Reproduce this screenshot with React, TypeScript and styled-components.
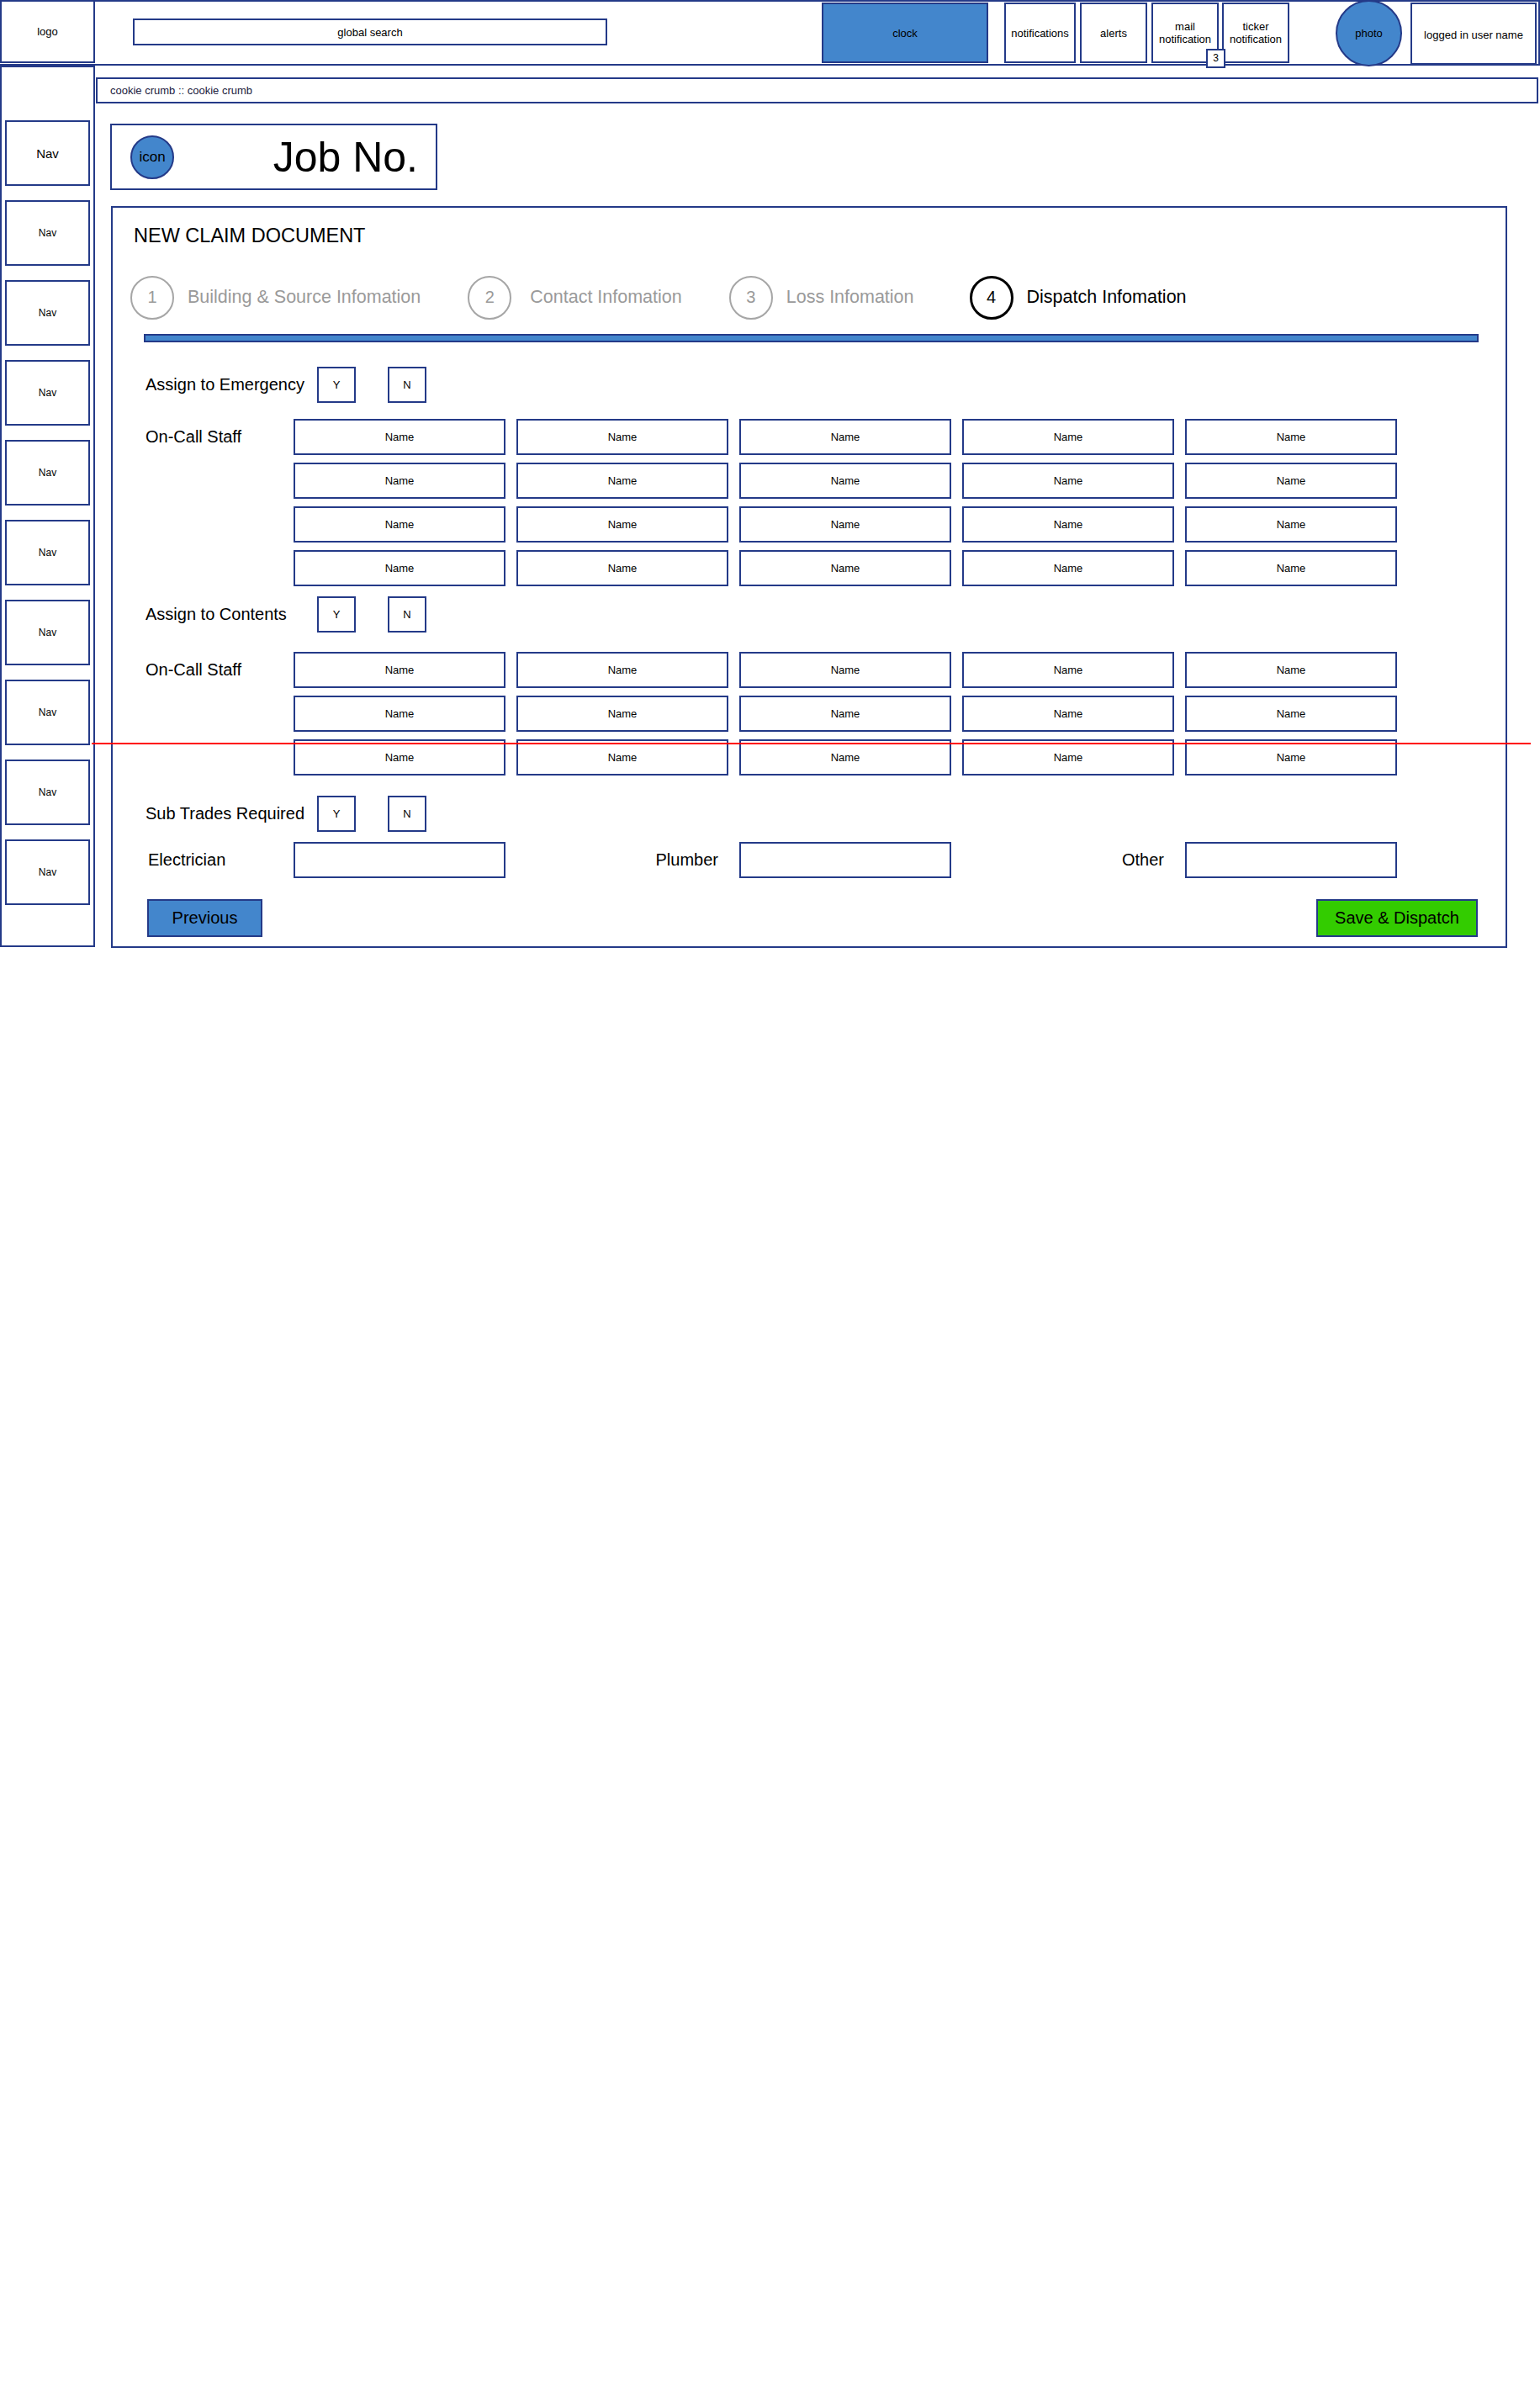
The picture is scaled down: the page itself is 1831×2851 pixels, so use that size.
import React from "react";
import styled, { createGlobalStyle } from "styled-components";

const navy = "#243a88";
const blue = "#4386cc";
const green = "#33cc00";

const GlobalStyle = createGlobalStyle`
  html, body {
    margin: 0;
    padding: 0;
    background: #ffffff;
  }
  body {
    font-family: "Liberation Sans", Arial, sans-serif;
    color: #000;
  }
  * {
    box-sizing: border-box;
  }
`;

const Page = styled.div`
  position: relative;
  width: 1831px;
  min-height: 2851px;
`;

/* ---------- header ---------- */

const Header = styled.header`
  display: flex;
  align-items: flex-start;
  height: 78px;
  border: 2px solid ${navy};
  border-left: none;
`;

const Logo = styled.div`
  width: 113px;
  height: 75px;
  margin-top: -2px;
  border: 2px solid ${navy};
  display: flex;
  align-items: center;
  justify-content: center;
  font-size: 13px;
`;

const Search = styled.div`
  width: 564px;
  height: 32px;
  margin: 20px 0 0 45px;
  border: 2px solid ${navy};
  display: flex;
  align-items: center;
  justify-content: center;
  font-size: 13px;
`;

const Tools = styled.div`
  display: flex;
  align-items: flex-start;
  margin-left: auto;
  margin-right: 2px;
`;

const ToolBox = styled.div<{ $w: number; $fill?: boolean; $gap?: number }>`
  position: relative;
  width: ${(p) => p.$w}px;
  height: 72px;
  margin-top: 1px;
  margin-left: ${(p) => p.$gap ?? 0}px;
  border: 2px solid ${navy};
  background: ${(p) => (p.$fill ? blue : "#fff")};
  display: flex;
  align-items: center;
  justify-content: center;
  text-align: center;
  font-size: 13px;
  line-height: 15px;
`;

const Badge = styled.div`
  position: absolute;
  left: 63px;
  top: 53px;
  width: 23px;
  height: 23px;
  border: 2px solid ${navy};
  background: #fff;
  display: flex;
  align-items: center;
  justify-content: center;
  font-size: 12px;
  z-index: 2;
`;

const Photo = styled.div`
  width: 79px;
  height: 79px;
  margin: -2px 0 0 55px;
  border-radius: 50%;
  border: 2px solid ${navy};
  background: ${blue};
  display: flex;
  align-items: center;
  justify-content: center;
  font-size: 13px;
  position: relative;
  z-index: 1;
`;

const UserBox = styled(ToolBox)`
  height: 74px;
  padding-top: 2px;
`;

/* ---------- body ---------- */

const Body = styled.div`
  display: flex;
  align-items: flex-start;
`;

const Sidebar = styled.nav`
  width: 113px;
  height: 1048px;
  border: 2px solid ${navy};
  padding: 63px 4px 0 4px;
  display: flex;
  flex-direction: column;
  gap: 17px;
`;

const NavItem = styled.div<{ $big?: boolean }>`
  height: 78px;
  border: 2px solid ${navy};
  display: flex;
  align-items: center;
  justify-content: center;
  font-size: ${(p) => (p.$big ? 15 : 12)}px;
`;

const Main = styled.main`
  flex: 1;
  display: flex;
  flex-direction: column;
`;

const Crumb = styled.div`
  height: 31px;
  margin: 14px 2px 0 1px;
  border: 2px solid ${navy};
  display: flex;
  align-items: center;
  padding-left: 15px;
  font-size: 13px;
  color: #1c2140;
`;

const Content = styled.div`
  padding-left: 18px;
  display: flex;
  flex-direction: column;
  align-items: flex-start;
`;

const JobBox = styled.div`
  width: 389px;
  height: 79px;
  margin-top: 24px;
  border: 2px solid ${navy};
  display: flex;
  align-items: center;
  justify-content: space-between;
  padding: 0 21px 0 22px;
`;

const IconDot = styled.div`
  width: 52px;
  height: 52px;
  border-radius: 50%;
  border: 2px solid ${navy};
  background: ${blue};
  display: flex;
  align-items: center;
  justify-content: center;
  font-size: 17px;
`;

const JobTitle = styled.div`
  font-size: 50px;
  line-height: 1;
`;

const Card = styled.section`
  width: 1660px;
  height: 882px;
  margin: 19px 0 0 1px;
  border: 2px solid ${navy};
  padding: 22px 0 0 25px;
  display: flex;
  flex-direction: column;
`;

const CardTitle = styled.h1`
  margin: 0;
  font-size: 23.5px;
  font-weight: 400;
  line-height: 1;
`;

/* ---------- stepper ---------- */

const Steps = styled.div`
  display: flex;
  align-items: center;
  gap: 56px;
  margin: 35px 0 0 -4px;
`;

const Step = styled.div<{ $gap?: number; $shift?: number }>`
  display: flex;
  align-items: center;
  gap: ${(p) => p.$gap ?? 16}px;
  margin-left: ${(p) => p.$shift ?? 0}px;
`;

const StepDot = styled.div<{ $active?: boolean }>`
  width: 52px;
  height: 52px;
  border-radius: 50%;
  border: ${(p) => (p.$active ? "3px solid #000" : "2px solid #a6a6a6")};
  color: ${(p) => (p.$active ? "#000" : "#9a9a9a")};
  display: flex;
  align-items: center;
  justify-content: center;
  font-size: 20px;
`;

const StepLabel = styled.span<{ $active?: boolean }>`
  font-size: 21.5px;
  color: ${(p) => (p.$active ? "#000" : "#9a9a9a")};
`;

const Progress = styled.div`
  width: 1587px;
  height: 10px;
  margin: 17px 0 0 12px;
  border: 2px solid ${navy};
  background: ${blue};
`;

/* ---------- form ---------- */

const Form = styled.div`
  display: flex;
  flex-direction: column;
  padding-left: 14px;
`;

const ChoiceRow = styled.div<{ $top: number }>`
  display: flex;
  align-items: center;
  margin-top: ${(p) => p.$top}px;
`;

const Label = styled.div<{ $w?: number }>`
  width: ${(p) => p.$w ?? 204}px;
  flex-shrink: 0;
  font-size: 20px;
`;

const Choice = styled.div`
  width: 46px;
  height: 43px;
  border: 2px solid ${navy};
  display: flex;
  align-items: center;
  justify-content: center;
  font-size: 13px;
  & + & {
    margin-left: 38px;
  }
`;

const StaffBlock = styled.div<{ $top: number }>`
  display: flex;
  align-items: flex-start;
  margin-top: ${(p) => p.$top}px;
`;

const StaffLabel = styled(Label)`
  height: 43px;
  display: flex;
  align-items: center;
`;

const NameGrid = styled.div`
  display: grid;
  grid-template-columns: repeat(5, 252px);
  column-gap: 13px;
  row-gap: 9px;
`;

const NameCell = styled.div`
  height: 43px;
  border: 2px solid ${navy};
  display: flex;
  align-items: center;
  justify-content: center;
  font-size: 13px;
`;

const TradeRow = styled.div`
  display: grid;
  grid-template-columns: 163px repeat(5, 252px);
  column-gap: 13px;
  align-items: center;
  margin-top: 12px;
`;

const TradeLabel = styled.div<{ $right?: boolean }>`
  font-size: 20px;
  text-align: ${(p) => (p.$right ? "right" : "left")};
  padding: ${(p) => (p.$right ? "0 12px 0 0" : "0 0 0 3px")};
`;

const TradeInput = styled.div`
  height: 43px;
  border: 2px solid ${navy};
`;

const Actions = styled.div`
  display: flex;
  justify-content: space-between;
  width: 1582px;
  margin: 25px 0 0 2px;
`;

const Button = styled.button<{ $primary?: boolean }>`
  height: 45px;
  padding: 0;
  width: ${(p) => (p.$primary ? 192 : 137)}px;
  border: 2px solid ${navy};
  background: ${(p) => (p.$primary ? green : blue)};
  font-family: "Liberation Sans", Arial, sans-serif;
  font-size: 20px;
  color: #000;
  cursor: pointer;
`;

const RedLine = styled.div`
  position: absolute;
  left: 109px;
  top: 883px;
  width: 1711px;
  height: 2px;
  background: #ff0000;
  pointer-events: none;
`;

const steps = [
  { n: 1, label: "Building & Source Infomation" },
  { n: 2, label: "Contact Infomation", gap: 22 },
  { n: 3, label: "Loss Infomation" },
  { n: 4, label: "Dispatch Infomation", active: true, shift: 10 },
];

const names = (rows: number) => Array.from({ length: rows * 5 }, (_, i) => i);

const YesNo = ({ label, top }: { label: string; top: number }) => (
  <ChoiceRow $top={top}>
    <Label>{label}</Label>
    <Choice>Y</Choice>
    <Choice>N</Choice>
  </ChoiceRow>
);

const Staff = ({ rows, top }: { rows: number; top: number }) => (
  <StaffBlock $top={top}>
    <StaffLabel $w={176}>On-Call Staff</StaffLabel>
    <NameGrid>
      {names(rows).map((i) => (
        <NameCell key={i}>Name</NameCell>
      ))}
    </NameGrid>
  </StaffBlock>
);

const App = () => {
  return (
    <Page>
      <GlobalStyle />
      <Header>
        <Logo>logo</Logo>
        <Search>global search</Search>
        <Tools>
          <ToolBox $w={198} $fill>
            clock
          </ToolBox>
          <ToolBox $w={85} $gap={19}>
            notifications
          </ToolBox>
          <ToolBox $w={80} $gap={5}>
            alerts
          </ToolBox>
          <ToolBox $w={80} $gap={5}>
            mail
            <br />
            notification
            <Badge>3</Badge>
          </ToolBox>
          <ToolBox $w={80} $gap={4}>
            ticker
            <br />
            notification
          </ToolBox>
          <Photo>photo</Photo>
          <UserBox $w={150} $gap={10}>
            logged in user name
          </UserBox>
        </Tools>
      </Header>

      <Body>
        <Sidebar>
          {Array.from({ length: 10 }, (_, i) => (
            <NavItem key={i} $big={i === 0}>
              Nav
            </NavItem>
          ))}
        </Sidebar>

        <Main>
          <Crumb>cookie crumb :: cookie crumb</Crumb>
          <Content>
            <JobBox>
              <IconDot>icon</IconDot>
              <JobTitle>Job No.</JobTitle>
            </JobBox>

            <Card>
              <CardTitle>NEW CLAIM DOCUMENT</CardTitle>

              <Steps>
                {steps.map((s) => (
                  <Step key={s.n} $gap={s.gap} $shift={s.shift}>
                    <StepDot $active={s.active}>{s.n}</StepDot>
                    <StepLabel $active={s.active}>{s.label}</StepLabel>
                  </Step>
                ))}
              </Steps>
              <Progress />

              <Form>
                <YesNo label="Assign to Emergency" top={29} />
                <Staff rows={4} top={19} />
                <YesNo label="Assign to Contents" top={12} />
                <Staff rows={3} top={23} />
                <YesNo label="Sub Trades Required" top={24} />
                <TradeRow>
                  <TradeLabel>Electrician</TradeLabel>
                  <TradeInput />
                  <TradeLabel $right>Plumber</TradeLabel>
                  <TradeInput />
                  <TradeLabel $right>Other</TradeLabel>
                  <TradeInput />
                </TradeRow>
                <Actions>
                  <Button>Previous</Button>
                  <Button $primary>Save &amp; Dispatch</Button>
                </Actions>
              </Form>
            </Card>
          </Content>
        </Main>
      </Body>
      <RedLine />
    </Page>
  );
};

export default App;
